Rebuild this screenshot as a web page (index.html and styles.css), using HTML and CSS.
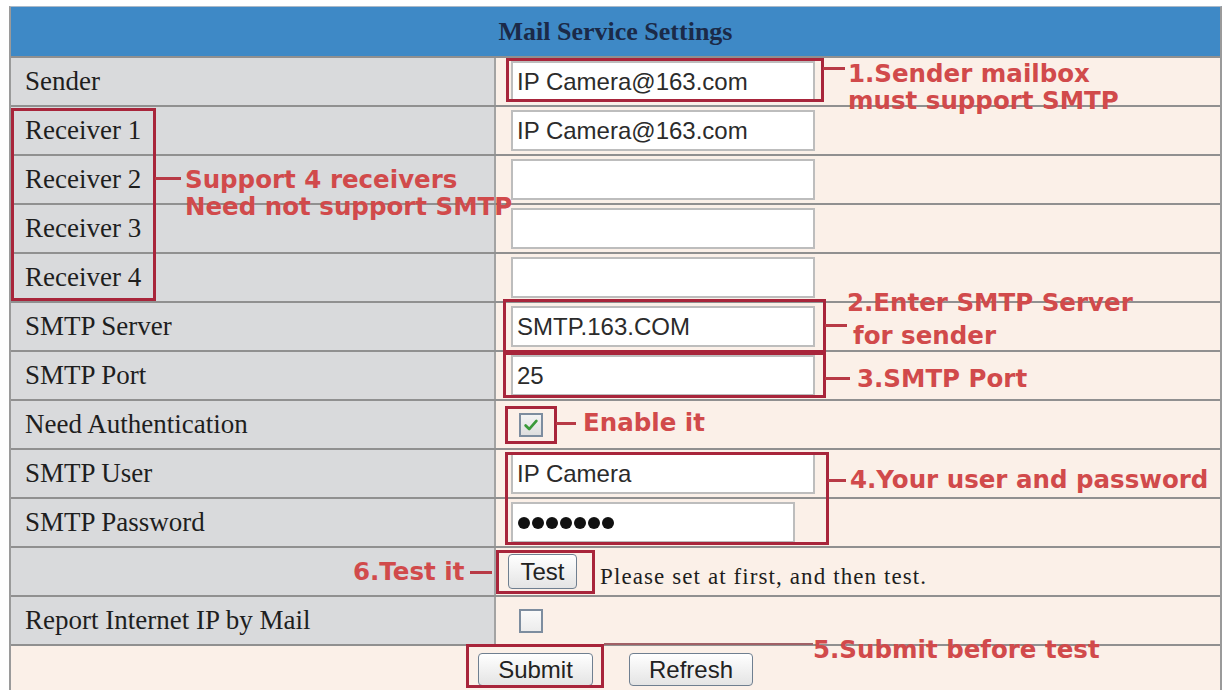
FILE: index.html
```html
<!DOCTYPE html>
<html>
<head>
<meta charset="utf-8">
<title>Mail Service Settings</title>
<link rel="stylesheet" href="styles.css">
</head>
<body>
<div class="panel">
  <div class="head">Mail Service Settings</div>
  <div class="row"><div class="lab">Sender</div><div class="val"><input class="field" type="text" value="IP Camera@163.com"></div></div>
  <div class="row"><div class="lab">Receiver 1</div><div class="val"><input class="field" type="text" value="IP Camera@163.com"></div></div>
  <div class="row"><div class="lab">Receiver 2</div><div class="val"><input class="field" type="text" value=""></div></div>
  <div class="row"><div class="lab">Receiver 3</div><div class="val"><input class="field" type="text" value=""></div></div>
  <div class="row"><div class="lab">Receiver 4</div><div class="val"><input class="field" type="text" value=""></div></div>
  <div class="row"><div class="lab">SMTP Server</div><div class="val"><input class="field" type="text" value="SMTP.163.COM"></div></div>
  <div class="row"><div class="lab">SMTP Port</div><div class="val"><input class="field" type="text" value="25"></div></div>
  <div class="row"><div class="lab">Need Authentication</div><div class="val"><span class="cb checked"><svg viewBox="0 0 20 20" width="18" height="18"><path d="M4 10.5 L8 14.5 L16 5.5" fill="none" stroke="#3a9a3a" stroke-width="3" stroke-linecap="round" stroke-linejoin="round"/></svg></span></div></div>
  <div class="row"><div class="lab">SMTP User</div><div class="val"><input class="field" type="text" value="IP Camera"></div></div>
  <div class="row"><div class="lab">SMTP Password</div><div class="val"><div class="field pass"><span class="dot"></span><span class="dot"></span><span class="dot"></span><span class="dot"></span><span class="dot"></span><span class="dot"></span><span class="dot"></span></div></div></div>
  <div class="row"><div class="lab"></div><div class="val"><button class="btn btn-test" type="button">Test</button><span class="note">Please set at first, and then test.</span></div></div>
  <div class="row"><div class="lab">Report Internet IP by Mail</div><div class="val"><span class="cb plain"></span></div></div>
  <div class="row foot"><button class="btn btn-submit" type="button">Submit</button><button class="btn btn-refresh" type="button">Refresh</button></div>
</div>

<div class="box b-sender"></div>
<div class="box b-recv"></div>
<div class="box b-server"></div>
<div class="box b-port"></div>
<div class="box b-auth"></div>
<div class="box b-user"></div>
<div class="box b-test"></div>
<div class="box b-submit"></div>

<div class="dash d1"></div>
<div class="dash d2"></div>
<div class="dash d3"></div>
<div class="dash d4"></div>
<div class="dash d5"></div>
<div class="dash d6"></div>
<div class="dash d7"></div>
<div class="dash d8"></div>

<div class="ann a1">1.Sender mailbox<br>must support SMTP</div>
<div class="ann a2">Support 4 receivers<br>Need not support SMTP</div>
<div class="ann a3"><div>2.Enter SMTP Server</div><div class="indent">for sender</div></div>
<div class="ann a4">3.SMTP Port</div>
<div class="ann a5">Enable it</div>
<div class="ann a6">4.Your user and password</div>
<div class="ann a7">6.Test it</div>
<div class="ann a8">5.Submit before test</div>
</body>
</html>
```

FILE: styles.css
```css
html, body {
  background: #ffffff;
}
body {
  margin: 0;
  padding: 6px 4px 0 9px;
  position: relative;
  height: 690px;
  overflow: hidden;
  box-sizing: border-box;
}
.panel {
  width: 1213px;
  border-left: 2px solid #9a9a9a;
  border-right: 2px solid #9a9a9a;
  border-top: 1px solid #a9b9c9;
  box-sizing: border-box;
}
.head {
  height: 49px;
  background: #3e89c6;
  color: #1b2a48;
  font: bold 26px "Liberation Serif", serif;
  line-height: 49px;
  text-align: center;
}
.row {
  display: grid;
  grid-template-columns: 485px 1fr;
  height: 49px;
  border-top: 2px solid #909090;
  box-sizing: border-box;
}
.lab {
  background: #d9dadc;
  border-right: 2px solid #a3a3a3;
  padding-left: 14px;
  font: 27px "Liberation Serif", serif;
  color: #1e1e1e;
  line-height: 46px;
  white-space: nowrap;
}
.val {
  background: #fbf0e8;
  padding-left: 15px;
  display: flex;
  align-items: center;
}
.field {
  width: 304px;
  height: 41px;
  box-sizing: border-box;
  border: 2px solid #bdbdbd;
  background: #ffffff;
  font: 24px "Liberation Sans", Arial, sans-serif;
  color: #2b2b2b;
  padding: 0 4px;
  margin: 0;
  outline: none;
}
.pass {
  width: 284px;
  display: flex;
  align-items: center;
  gap: 2px;
  padding-left: 5px;
}
.dot {
  width: 12px;
  height: 12px;
  border-radius: 50%;
  background: #111;
}
.cb {
  width: 24px;
  height: 24px;
  box-sizing: border-box;
  border: 2px solid #7d8d9f;
  background: linear-gradient(#f4f4f4, #dedede);
  margin-left: 8px;
  display: flex;
  align-items: center;
  justify-content: center;
}
.cb.plain {
  background: linear-gradient(#fafafa, #ececec);
}
.btn {
  font: 24px "Liberation Sans", Arial, sans-serif;
  color: #222;
  background: linear-gradient(#ffffff, #e4e4e4);
  border: 1px solid #6f7f90;
  border-radius: 4px;
  padding: 0;
  margin: 0;
}
.btn-test {
  width: 69px;
  height: 35px;
  margin-left: -3px;
}
.note {
  margin-left: 23px;
  margin-top: 10px;
  font: 23px "Liberation Serif", serif;
  letter-spacing: 1.1px;
  color: #1e1e1e;
}
.foot {
  display: flex;
  justify-content: center;
  align-items: center;
  gap: 36px;
  background: #fbf0e8;
}
.btn-submit {
  width: 115px;
  height: 33px;
}
.btn-refresh {
  width: 124px;
  height: 33px;
}

/* annotation overlays */
.box {
  position: absolute;
  border: 3px solid #a8253b;
  box-sizing: border-box;
}
.b-sender { left: 506px; top: 58px; width: 318px; height: 44px; }
.b-recv { left: 11px; top: 108px; width: 145px; height: 193px; }
.b-server { left: 503px; top: 299px; width: 323px; height: 54px; }
.b-port { left: 503px; top: 352px; width: 323px; height: 46px; }
.b-auth { left: 505px; top: 406px; width: 52px; height: 38px; }
.b-user { left: 505px; top: 452px; width: 324px; height: 93px; }
.b-test { left: 496px; top: 550px; width: 99px; height: 44px; }
.b-submit { left: 466px; top: 644px; width: 138px; height: 44px; }

.dash {
  position: absolute;
  height: 3px;
  background: #b83a46;
}
.d1 { left: 823px; top: 67px; width: 22px; }
.d2 { left: 155px; top: 177px; width: 26px; }
.d3 { left: 825px; top: 324px; width: 22px; }
.d4 { left: 825px; top: 377px; width: 25px; }
.d5 { left: 556px; top: 422px; width: 20px; }
.d6 { left: 828px; top: 479px; width: 18px; }
.d7 { left: 470px; top: 571px; width: 22px; }
.d8 { left: 604px; top: 643px; width: 209px; height: 2px; background: #a06066; }

.ann {
  position: absolute;
  font: bold 24.5px "DejaVu Sans", Verdana, sans-serif;
  color: #d14a4b;
  line-height: 27px;
  white-space: nowrap;
}
.a1 { left: 848px; top: 60px; }
.a2 { left: 185px; top: 166px; }
.a3 { left: 847px; top: 286px; line-height: 33px; }
.a3 .indent { padding-left: 6px; }
.a4 { left: 857px; top: 365px; }
.a5 { left: 583px; top: 409px; }
.a6 { left: 850px; top: 466px; }
.a7 { left: 353px; top: 558px; }
.a8 { left: 813px; top: 636px; }
```
